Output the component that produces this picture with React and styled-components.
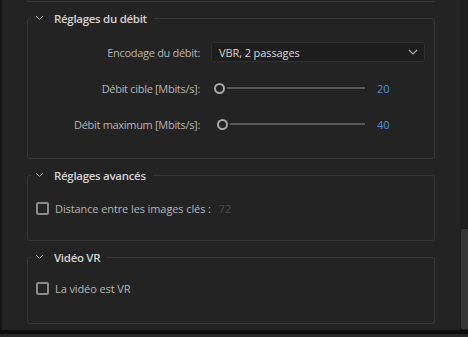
import React from 'react';
import styled, { createGlobalStyle } from 'styled-components';

const GlobalStyle = createGlobalStyle`
  html, body {
    margin: 0;
    padding: 0;
    background: #0c0c0c;
  }
  body {
    font-family: "Open Sans", "Noto Sans", sans-serif;
    -webkit-font-smoothing: antialiased;
  }
`;

const Window = styled.div`
  width: 468px;
  height: 337px;
  display: flex;
  flex-direction: column;
  overflow: hidden;
`;

const Body = styled.div`
  height: 330px;
  display: flex;
  background: #232323;
  border-left: 2px solid #171717;
`;

const Main = styled.div`
  flex: 1;
  padding: 0 25px;
  display: flex;
  flex-direction: column;
  gap: 8px;
`;

const PrevTail = styled.div`
  height: 1px;
  border: 1px solid #363636;
  border-top: none;
  border-radius: 0 0 3px 3px;
`;

const Section = styled.fieldset`
  margin: 0;
  padding: 0;
  border: 1px solid #363636;
  border-radius: 3px;
  min-width: 0;
  height: ${p => p.$height}px;
  box-sizing: border-box;
`;

const Legend = styled.legend`
  margin-left: 3px;
  padding: 0 7px 0 4px;
  display: flex;
  align-items: center;
  gap: 10px;
  height: 16px;
  font-size: 11.5px;
  font-weight: 600;
  color: #d2d2d2;
  letter-spacing: -0.3px;
`;

const Chevron = () => (
  <svg width="9" height="6" viewBox="0 0 9 6">
    <path d="M1 1 L4.5 4.5 L8 1" fill="none" stroke="#9a9a9a" strokeWidth="1" />
  </svg>
);

const Grid = styled.div`
  display: grid;
  grid-template-columns: 172px 1fr;
  column-gap: 11px;
  padding: 8px 9px 0 0;
`;

const Label = styled.div`
  height: 36px;
  display: flex;
  align-items: center;
  justify-content: flex-end;
  font-size: 11px;
  color: #b4b4b4;
  letter-spacing: -0.3px;
`;

const Cell = styled.div`
  height: 36px;
  display: flex;
  align-items: center;
`;

const Select = styled.div`
  flex: 1;
  height: 20px;
  box-sizing: border-box;
  background: #1d1d1d;
  border: 1px solid #2f2f2f;
  border-radius: 3px;
  display: flex;
  align-items: center;
  justify-content: space-between;
  padding: 0 6px 0 7px;
  font-size: 11px;
  color: #d6d6d6;
  letter-spacing: -0.1px;
`;

const Slider = styled.div`
  width: 154px;
  height: 12px;
  display: flex;
  align-items: center;
`;

const Spacer = styled.div`
  flex: none;
`;

const Knob = styled.div`
  width: 11px;
  height: 11px;
  box-sizing: border-box;
  border: 2px solid #a8a8a8;
  border-radius: 50%;
  flex: none;
`;

const Track = styled.div`
  flex: 1;
  height: 2px;
  background: #585858;
  margin-left: 2px;
`;

const Value = styled.span`
  margin-left: ${p => (p.$muted ? 8 : 12)}px;
  font-size: 11px;
  color: ${p => (p.$muted ? '#4c4c4c' : '#4b8fd6')};
`;

const CheckRow = styled.div`
  display: flex;
  align-items: center;
  height: 16px;
  padding-top: ${p => p.$pad}px;
  font-size: 11px;
  color: #b4b4b4;
  letter-spacing: -0.1px;
`;

const Box = styled.span`
  width: 13px;
  height: 13px;
  box-sizing: border-box;
  border: 2px solid #8a8a8a;
  border-radius: 2px;
  margin: 0 6px 0 8px;
  flex: none;
`;

const Footer = styled.div`
  flex: 1;
  border-top: 4px solid #0c0c0c;
  background: #262626;
  height: 2px;
`;

const ScrollTrack = styled.div`
  width: 8px;
  background: #1e1e1e;
  display: flex;
  flex-direction: column;
`;

const Thumb = styled.div`
  margin-top: 229px;
  height: 100px;
  margin-left: 1px;
  background: #363636;
  border-radius: 3px 0 0 3px;
`;

const SelectArrow = () => (
  <svg width="10" height="6" viewBox="0 0 10 6">
    <path d="M1 1 L5 5 L9 1" fill="none" stroke="#b0b0b0" strokeWidth="1.2" />
  </svg>
);

const SliderRow = ({ label, value, max }) => (
  <>
    <Label>{label}</Label>
    <Cell>
      <Slider>
        <Spacer style={{ width: Math.round((value / max) * 154) }} />
        <Knob />
        <Track />
      </Slider>
      <Value>{value}</Value>
    </Cell>
  </>
);

export default function App() {
  return (
    <Window>
      <GlobalStyle />
      <Body>
        <Main>
          <PrevTail />
          <Section $height={149}>
            <Legend><Chevron />Réglages du débit</Legend>
            <Grid>
              <Label>Encodage du débit:</Label>
              <Cell>
                <Select>
                  <span>VBR, 2 passages</span>
                  <SelectArrow />
                </Select>
              </Cell>
              <SliderRow label="Débit cible [Mbits/s]:" value={20} max={1000} />
              <SliderRow label="Débit maximum [Mbits/s]:" value={40} max={1000} />
            </Grid>
          </Section>
          <Section $height={74}>
            <Legend><Chevron />Réglages avancés</Legend>
            <CheckRow $pad={17}>
              <Box />
              Distance entre les images clés :
              <Value $muted>72</Value>
            </CheckRow>
          </Section>
          <Section $height={75}>
            <Legend><Chevron />Vidéo VR</Legend>
            <CheckRow $pad={15}>
              <Box />
              La vidéo est VR
            </CheckRow>
          </Section>
        </Main>
        <ScrollTrack>
          <Thumb />
        </ScrollTrack>
      </Body>
      <Footer />
    </Window>
  );
}
